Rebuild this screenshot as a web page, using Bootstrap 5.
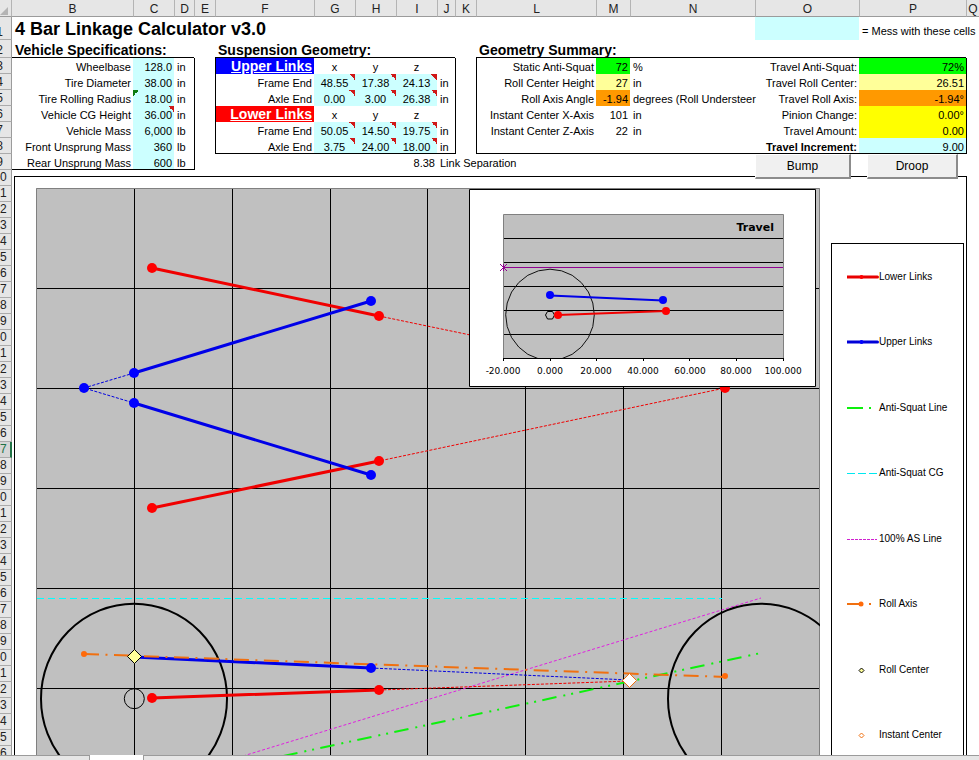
<!DOCTYPE html>
<html lang="en">
<head>
<meta charset="utf-8">
<meta name="viewport" content="width=device-width, initial-scale=1">
<title>4 Bar Linkage Calculator v3.0</title>
<link rel="stylesheet" href="https://cdn.jsdelivr.net/npm/bootstrap@5.3.0/dist/css/bootstrap.min.css">
<style>
body{font:11px/14px "Liberation Sans",Arial,sans-serif;color:#000;background:#fff}
.sheet{table-layout:fixed;border-collapse:separate;border-spacing:0;z-index:2}
.sheet td{height:16px;padding:0 2px;vertical-align:bottom;white-space:nowrap}
.sheet td.u{padding-left:3px}
.sheet .r1>*{height:23px}
.sheet .r2>*{height:18px}
.colhead th{height:17px;padding:1px 0 0;background:#e6e6e6;border-left:1px solid #b4b4b4;border-bottom:1px solid #9b9b9b;font-weight:400;font-size:12px;line-height:14px;text-align:center;color:#222}
.colhead th:first-child{border-left:0;border-right:1px solid #b4b4b4}
.colhead th:nth-child(2){border-left:0}
.rownum{width:12px;height:16px;padding:0;background:#e6e6e6;border-right:1px solid #9b9b9b;border-bottom:1px solid #ababab;font-weight:400;font-size:12px;line-height:14px;vertical-align:bottom;color:#222}
.sheet .rownum span{display:block;margin-left:-12px;text-align:center}
.rownum.picked{background:#d6d6d6;color:#217346;border-right:2px solid #217346}
.title-text{font-size:18px;line-height:22px;font-weight:700}
.sheet td.title-text,.sheet td.head-text{padding-left:3px;text-align:left}
.head-text{font-size:14px;line-height:16px;font-weight:700}
.linkname{font-size:14px;line-height:15px;font-weight:700;text-decoration:underline;color:#fff;text-align:right}
.bb{box-shadow:inset 0 -1px #000}
.br{position:relative;z-index:1;box-shadow:1px 0 #000}
.bb.br{box-shadow:inset 0 -1px #000,1px 0 #000}
.f-in{background-color:#cff}
.f-green{background-color:#0f0}
.f-pale{background-color:#ff9}
.f-orange{background-color:#f90}
.f-yellow{background-color:#ff0}
.f-blue{background-color:#00f}
.f-red{background-color:#f00}
.note{background-image:linear-gradient(to bottom left,#d01818 50%,transparent 50%);background-size:6px 6px;background-position:right top;background-repeat:no-repeat}
.warn{background-image:linear-gradient(to bottom right,#107c10 50%,transparent 50%);background-size:6px 6px;background-position:left top;background-repeat:no-repeat}
.keybtn{top:0;height:25px;padding:0;background:#f0f0f0;border:solid;border-width:1px 2px 2px 1px;border-color:#fff #8c8c8c #8c8c8c #fff;font-size:12px;line-height:14px;color:#000}
.bump{left:0;width:96px}
.droop{left:8px;width:91px}
.chart{margin:6px 12px 0 2px;padding:11px 2px 0 21px;gap:11px;border:1px solid #000;border-bottom:0}
.plot{min-width:0}
.plot svg{width:100%;height:auto}
.legend-box{width:133px;height:526px;margin-top:55px;border:1px solid #000;font-size:10px}
.legend-box li{padding-left:15px}
.tabs{height:5px;background:#e6e6e6;border-top:1px solid #9b9b9b;z-index:3}
.tabs i{width:55px;height:5px;margin:-1px 0 0 89px;background:#fff;border:solid #9b9b9b;border-width:0 1px}
</style>
<script src="https://cdn.jsdelivr.net/npm/bootstrap@5.3.0/dist/js/bootstrap.bundle.min.js"></script>
</head>
<body>
<div class="vh-100 d-flex flex-column overflow-hidden">
<main class="flex-grow-1 overflow-hidden">
<table class="sheet w-100 position-relative">
<colgroup><col style="width:12px"><col style="width:121px"><col style="width:41px"><col style="width:20px"><col style="width:21px"><col style="width:99px"><col style="width:41px"><col style="width:41px"><col style="width:41px"><col style="width:18px"><col style="width:21px"><col style="width:120px"><col style="width:34px"><col style="width:125px"><col style="width:104px"><col style="width:107px"><col></colgroup>
<thead><tr class="colhead"><th><svg class="d-block" width="11" height="14" viewBox="0 0 11 14" aria-hidden="true"><path d="M8 5v8H0z" fill="#b4b4b4"/></svg></th><th>B</th><th>C</th><th>D</th><th>E</th><th>F</th><th>G</th><th>H</th><th>I</th><th>J</th><th>K</th><th>L</th><th>M</th><th>N</th><th>O</th><th>P</th><th>Q</th></tr></thead>
<tbody>
<tr class="r1"><th class="rownum"><span>1</span></th><td colspan="6" class="title-text">4 Bar Linkage Calculator v3.0</td><td colspan="7"></td><td class="f-in"></td><td colspan="2" class="u align-middle pt-1">= Mess with these cells</td></tr>
<tr class="r2"><th class="rownum"><span>2</span></th><td colspan="3" class="head-text bb">Vehicle Specifications:</td><td></td><td colspan="5" class="head-text bb">Suspension Geometry:</td><td></td><td colspan="5" class="head-text bb">Geometry Summary:</td><td></td></tr>
<tr><th class="rownum"><span>3</span></th><td class="text-end">Wheelbase</td><td class="text-end f-in">128.0</td><td class="u br">in</td><td class="br"></td><td class="linkname f-blue">Upper Links</td><td class="text-center">x</td><td class="text-center">y</td><td class="text-center">z</td><td class="br"></td><td class="br"></td><td class="text-end">Static Anti-Squat</td><td class="text-end f-green">72</td><td class="u">%</td><td class="text-end">Travel Anti-Squat:</td><td class="text-end f-green br">72%</td><td></td></tr>
<tr><th class="rownum"><span>4</span></th><td class="text-end">Tire Diameter</td><td class="text-end f-in">38.00</td><td class="u br">in</td><td class="br"></td><td class="text-end">Frame End</td><td class="text-center f-in note">48.55</td><td class="text-center f-in note">17.38</td><td class="text-center f-in note">24.13</td><td class="u br">in</td><td class="br"></td><td class="text-end">Roll Center Height</td><td class="text-end f-pale">27</td><td class="u">in</td><td class="text-end">Travel Roll Center:</td><td class="text-end f-pale br">26.51</td><td></td></tr>
<tr><th class="rownum"><span>5</span></th><td class="text-end">Tire Rolling Radius</td><td class="text-end f-in warn">18.00</td><td class="u br">in</td><td class="br"></td><td class="text-end">Axle End</td><td class="text-center f-in note">0.00</td><td class="text-center f-in note">3.00</td><td class="text-center f-in note">26.38</td><td class="u br">in</td><td class="br"></td><td class="text-end">Roll Axis Angle</td><td class="text-end f-orange">-1.94</td><td class="u">degrees (Roll Understeer</td><td class="text-end">Travel Roll Axis:</td><td class="text-end f-orange br">-1.94°</td><td></td></tr>
<tr><th class="rownum"><span>6</span></th><td class="text-end">Vehicle CG Height</td><td class="text-end f-in note">36.00</td><td class="u br">in</td><td class="br"></td><td class="linkname f-red">Lower Links</td><td class="text-center">x</td><td class="text-center">y</td><td class="text-center">z</td><td class="br"></td><td class="br"></td><td class="text-end">Instant Center X-Axis</td><td class="text-end">101</td><td class="u">in</td><td class="text-end">Pinion Change:</td><td class="text-end f-yellow br">0.00°</td><td></td></tr>
<tr><th class="rownum"><span>7</span></th><td class="text-end">Vehicle Mass</td><td class="text-end f-in">6,000</td><td class="u br">lb</td><td class="br"></td><td class="text-end">Frame End</td><td class="text-center f-in note">50.05</td><td class="text-center f-in note">14.50</td><td class="text-center f-in note">19.75</td><td class="u br">in</td><td class="br"></td><td class="text-end">Instant Center Z-Axis</td><td class="text-end">22</td><td class="u">in</td><td class="text-end">Travel Amount:</td><td class="text-end f-yellow br">0.00</td><td></td></tr>
<tr><th class="rownum"><span>8</span></th><td class="text-end">Front Unsprung Mass</td><td class="text-end f-in">360</td><td class="u br">lb</td><td class="br"></td><td class="text-end bb">Axle End</td><td class="text-center f-in note bb">3.75</td><td class="text-center f-in note bb">24.00</td><td class="text-center f-in note bb">18.00</td><td class="u bb br">in</td><td class="br"></td><td class="bb"></td><td class="bb"></td><td class="bb"></td><td class="text-end fw-bold bb">Travel Increment:</td><td class="text-end f-in bb br">9.00</td><td></td></tr>
<tr><th class="rownum"><span>9</span></th><td class="text-end bb">Rear Unsprung Mass</td><td class="text-end f-in bb">600</td><td class="u bb br">lb</td><td></td><td></td><td></td><td></td><td class="text-end">8.38</td><td colspan="5" class="u">Link Separation</td><td class="position-relative"><button type="button" class="keybtn bump position-absolute">Bump</button></td><td class="position-relative"><button type="button" class="keybtn droop position-absolute">Droop</button></td><td></td></tr>
</tbody>
</table>

<div class="d-flex">
<div id="rows" class="flex-shrink-0"></div>
<section class="chart d-flex flex-grow-1 align-items-start" aria-label="Linkage chart">
<div class="plot flex-grow-1">
<svg class="d-block" viewBox="36 188 784 568" font-family="'DejaVu Sans',Verdana,sans-serif">
<defs><clipPath id="inner"><path d="M503 214h281v144H503z"/></clipPath></defs>
<path fill="#c0c0c0" d="M36 188h784v568H36z"/>
<path fill="none" stroke="#000" d="M134.500 189v567M232.500 189v567M330.500 189v567M427.500 189v567M525.500 189v567M623.500 189v567M721.500 189v567M37 288.500h782M37 388.500h782M37 488.500h782M37 588.500h782M37 688.500h782"/>
<path fill="none" stroke="#808080" d="M36.500 756V188.500H819.500V756"/>
<g fill="none" stroke="#000" stroke-width="2"><ellipse cx="134" cy="698.700" rx="93" ry="95"/><ellipse cx="761" cy="698.700" rx="93" ry="95"/></g>
<circle cx="134.300" cy="698.700" r="10" fill="none" stroke="#000"/>
<path d="M37 598.500H722" stroke="#0ff" stroke-dasharray="7 4" fill="none"/>
<path d="M243 756L761 598" stroke="#e020e0" stroke-dasharray="3 2" fill="none"/>
<path d="M283.300 756L761 653" stroke="#0df00d" stroke-width="2" stroke-dasharray="14.500 7 2 6 2 6.350" fill="none"/>
<g fill="none" stroke="#f00000" stroke-dasharray="3 1.500"><path d="M379 316L725 388L379 461M379 690L629 681"/></g>
<g fill="none" stroke="#0000e0" stroke-dasharray="3 1.500"><path d="M134 373L84 388L134 403M371 668L629 680"/></g>
<g fill="none" stroke="#f00000" stroke-width="3"><path d="M152 268L379 316M152 508L379 461M152 698L379 690"/></g>
<g fill="none" stroke="#0000e8" stroke-width="3"><path d="M134 373L371 301M134 403L371 475M134 657L371 668"/></g>
<path d="M84 654L725 677" stroke="#f07010" stroke-width="2" stroke-dasharray="15 6.500 2 6.500" fill="none"/>
<g fill="red"><circle cx="152" cy="268" r="5"/><circle cx="379" cy="316" r="5"/><circle cx="152" cy="508" r="5"/><circle cx="379" cy="461" r="5"/><circle cx="152" cy="698" r="5"/><circle cx="379" cy="690" r="5"/><circle cx="725" cy="388" r="5"/></g>
<g fill="#00f"><circle cx="134" cy="373" r="5"/><circle cx="371" cy="301" r="5"/><circle cx="134" cy="403" r="5"/><circle cx="371" cy="475" r="5"/><circle cx="84" cy="388" r="5"/><circle cx="371" cy="668" r="5"/></g>
<g fill="#ff6a0a"><circle cx="84" cy="654" r="3"/><circle cx="725" cy="676" r="3"/></g>
<path d="M134.500 649.500l7 7-7 7-7-7z" fill="#ff9" stroke="#000"/>
<path d="M629.500 673.500l7 7-7 7-7-7z" fill="#fff" stroke="#f07010"/>
<path d="M469.500 189.500h346v197h-346z" fill="#fff" stroke="#000"/>
<path d="M503.500 214.500h280v144h-280z" fill="#c0c0c0" stroke="#808080"/>
<path d="M504 238.500h279M504 262.500h279M504 286.500h279M504 310.500h279M504 334.500h279M503 358.500h281M503.500 358v3M550.500 358v3M596.500 358v3M643.500 358v3M689.500 358v3M736.500 358v3M783.500 358v3" fill="none" stroke="#000"/>
<path d="M503 267.500h280M500 264l7 7M507 264l-7 7M503.500 264v7" fill="none" stroke="#900090"/>
<g clip-path="url(#inner)"><path d="M550 269.200L561.500 270.800L572.200 275.300L581.300 282.600L588.400 292L592.800 303L594.300 314.800L592.800 326.600L588.400 337.600L581.300 347L572.200 354.300L561.500 358.800L550 360.400L538.500 358.800L527.800 354.300L518.700 347L511.600 337.600L507.200 326.600L505.700 314.800L507.200 303L511.600 292L518.700 282.600L527.800 275.300L538.500 270.800Z" fill="none" stroke="#111"/></g>
<path d="M545.500 315l2-3.500h5l2 3.500-2 4h-5z" fill="none" stroke="#000"/>
<path d="M550 295.500L663 300.500" stroke="#0000e8" stroke-width="2"/><path d="M558 315L666 311" stroke="#f00000" stroke-width="2"/>
<g fill="#00f"><circle cx="550" cy="295" r="4"/><circle cx="663" cy="300" r="4"/></g>
<g fill="red"><circle cx="558" cy="315" r="4"/><circle cx="666" cy="311" r="4"/></g>
<text x="774" y="231" text-anchor="end" font-size="11" font-weight="700">Travel</text>
<g font-size="9" text-anchor="middle"><text x="503" y="374">-20.000</text><text x="550" y="374">0.000</text><text x="596" y="374">20.000</text><text x="643" y="374">40.000</text><text x="690" y="374">60.000</text><text x="736" y="374">80.000</text><text x="783" y="374">100.000</text></g>
</svg>
</div>
<ul class="legend-box list-unstyled mb-0 flex-shrink-0 d-flex flex-column">
<li class="d-flex flex-fill align-items-center"><svg width="32" height="10" viewBox="0 0 32 10"><path d="M0.500 5h30" stroke="#e80000" stroke-width="3" stroke-linecap="round"/><circle cx="14.500" cy="5" r="2" fill="red"/></svg>Lower Links</li>
<li class="d-flex flex-fill align-items-center"><svg width="32" height="10" viewBox="0 0 32 10"><path d="M0.500 5h30" stroke="#0000d8" stroke-width="3" stroke-linecap="round"/><circle cx="14.500" cy="5" r="2" fill="#00f"/></svg>Upper Links</li>
<li class="d-flex flex-fill align-items-center"><svg width="32" height="10" viewBox="0 0 32 10"><path d="M0 5h16M22 5h2" stroke="#0df00d" stroke-width="2"/></svg>Anti-Squat Line</li>
<li class="d-flex flex-fill align-items-center"><svg width="32" height="10" viewBox="0 0 32 10" shape-rendering="crispEdges"><path d="M0 5.500h30" stroke="#00e8f0" stroke-dasharray="8 3"/></svg>Anti-Squat CG</li>
<li class="d-flex flex-fill align-items-center"><svg width="32" height="10" viewBox="0 0 32 10" shape-rendering="crispEdges"><path d="M0 5.500h30" stroke="#d020d0" stroke-dasharray="3 1"/></svg>100% AS Line</li>
<li class="d-flex flex-fill align-items-center"><svg width="32" height="10" viewBox="0 0 32 10"><path d="M0 5h15M22 5h2" stroke="#f07010" stroke-width="2"/><circle cx="14" cy="5" r="2.500" fill="#ff6a0a"/></svg>Roll Axis</li>
<li class="d-flex flex-fill align-items-center"><svg width="32" height="10" viewBox="0 0 32 10"><path d="M14.500 3l2.500 2.500L14.500 8 12 5.500z" fill="#ff9" stroke="#000"/></svg>Roll Center</li>
<li class="d-flex flex-fill align-items-center"><svg width="32" height="10" viewBox="0 0 32 10"><path d="M14.500 3l2.500 2.500L14.500 8 12 5.500z" fill="#fff" stroke="#f07010"/></svg>Instant Center</li>
</ul>
</section>
</div>
</main>
<footer class="tabs d-flex flex-shrink-0 position-relative"><i class="d-block"></i></footer>
</div>
<script>
// The narrow gutter has room for the last digit of each row number only.
const rows = document.getElementById('rows');
for (let n = 10; n <= 46; n++) {
  const cell = document.createElement('div');
  cell.className = n === 27 ? 'rownum picked' : 'rownum';
  cell.textContent = n % 10;
  rows.append(cell);
}
</script>
</body>
</html>
